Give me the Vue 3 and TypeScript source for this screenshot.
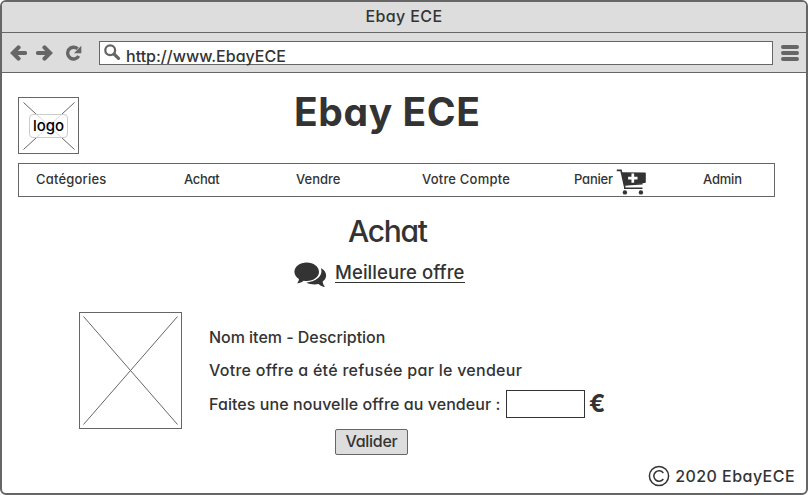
<script setup lang="ts">
import { ref } from 'vue'

interface NavItem {
  label: string
  cls: string
  cart?: boolean
}

const url = 'http://www.EbayECE'
const offer = ref('')
const navItems: NavItem[] = [
  { label: 'Catégories', cls: 'categories' },
  { label: 'Achat', cls: 'achat' },
  { label: 'Vendre', cls: 'vendre' },
  { label: 'Votre Compte', cls: 'compte' },
  { label: 'Panier', cls: 'panier', cart: true },
  { label: 'Admin', cls: 'admin' },
]
</script>

<template>
  <div class="window">
    <div class="titlebar"><span>Ebay ECE</span></div>
    <div class="toolbar">
      <svg class="nav-arrow" width="17" height="16" viewBox="0 0 17 16">
        <path d="M8.500 2.400 3 8l5.500 5.600M4 8h11" />
      </svg>
      <svg class="nav-arrow forward" width="17" height="16" viewBox="0 0 17 16">
        <path d="M8.500 2.400 14 8l-5.500 5.600M13 8H2" />
      </svg>
      <svg class="reload" width="17" height="16" viewBox="0 0 17 16">
        <path class="arc" d="M12.600 3.800A5.900 5.900 0 1 0 13.700 11" />
        <path class="head" d="M16.300 .8v7.400H9z" />
      </svg>
      <div class="address">
        <svg class="search" width="18" height="18" viewBox="0 0 18 18">
          <circle cx="6.200" cy="6.300" r="4.900" />
          <path d="m10 10 4.500 4.300" />
        </svg>
        <span>{{ url }}</span>
      </div>
      <div class="menu"><i></i><i></i><i></i></div>
    </div>

    <main>
      <header>
        <div class="logo">
          <svg width="59" height="55" viewBox="0 0 59 55"><path d="m4.500 4.500 51 47M55.500 4.500l-51 47" /></svg>
          <span>logo</span>
        </div>
        <h1>Ebay ECE</h1>
      </header>

      <nav>
        <a v-for="item in navItems" :key="item.label" :class="item.cls">
          <span>{{ item.label }}</span>
          <svg v-if="item.cart" width="30" height="26" viewBox="0 0 30 26">
            <path class="frame" d="M.8 1.400H5L9 19.300M7.500 16l19-1.200M8 19.200h18.500" />
            <path class="basket" d="M5.800 3.200 29 3.500q.8 0 .8.800v8.700q0 1-1 1.100L8.200 16.600z" />
            <circle cx="8.900" cy="23.400" r="2.200" />
            <circle cx="24.900" cy="23.400" r="2.200" />
            <path class="plus" d="M16.800 4.400v9.400M12.100 9.100h9.400" />
          </svg>
        </a>
      </nav>

      <h2>Achat</h2>
      <div class="best-offer">
        <svg width="33" height="26" viewBox="0 0 33 26">
          <path d="M26.900 6.300c3.300 1.500 5.200 4.200 5.200 7.300 0 2.500-1.300 4.500-3.400 6 .1 2.200.7 3.700 2.300 5.200-2.600 0-4.600-.9-6.400-2.800-4.200.8-8.700.4-12.200-1.600C20.700 20 29.800 14.500 26.900 6.300z" />
          <path d="M12.700.5C19.500.5 25 4.600 25 9.800s-5.500 9.300-12.300 9.300c-1 0-2-.1-3-.3C7.900 20.500 5.400 21.300 2.900 21.200c1.300-1.100 2-2.600 2-4.300C2.100 15.200.400 12.700.400 9.800.400 4.600 5.900.5 12.700.5z" />
        </svg>
        <a>Meilleure offre</a>
      </div>

      <section class="item">
        <svg class="photo" width="103" height="117" viewBox="0 0 103 117">
          <rect x=".5" y=".5" width="102" height="116" />
          <path d="M4.500 4.500 98.500 112.500M98.500 4.500 4.500 112.500" />
        </svg>
        <form @submit.prevent>
          <p class="name">Nom item - Description</p>
          <p class="status">Votre offre a été refusée par le vendeur</p>
          <label>
            <span>Faites une nouvelle offre au vendeur :</span>
            <input v-model="offer" type="text" />
            <b>€</b>
          </label>
          <button type="submit"><span>Valider</span></button>
        </form>
      </section>

      <footer>
        <svg width="22" height="22" viewBox="0 0 22 22">
          <circle cx="11" cy="11" r="9.600" />
          <path d="M15.300 8A5.200 5.200 0 1 0 15.300 14" />
        </svg>
        <span>2020 EbayECE</span>
      </footer>
    </main>
  </div>
</template>

<style>
body {
  background: #fff;
}
</style>

<style scoped>
* {
  box-sizing: border-box;
}
.window {
  width: 808px;
  height: 495px;
  display: flex;
  flex-direction: column;
  border: 2px solid #666;
  border-radius: 6px;
  overflow: hidden;
  background: #fff;
  color: #333;
  font-family: Inter, "Liberation Sans", sans-serif;
  font-feature-settings: "cv11";
  font-size: 16px;
  font-weight: 500;
  white-space: nowrap;
}
.titlebar {
  height: 31px;
  flex: none;
  border-bottom: 1px solid #666;
  background: #ddd;
  text-align: center;
  line-height: 29px;
  letter-spacing: 0.4px;
}
.toolbar {
  height: 40px;
  flex: none;
  display: flex;
  align-items: center;
  padding: 0 6px 0 8px;
  background: #ddd;
  border-bottom: 1px solid #666;
}
.nav-arrow {
  fill: none;
  stroke: #666;
  stroke-width: 4.200;
  stroke-linecap: round;
}
.forward {
  margin-left: 9px;
}
.reload {
  margin-left: 12px;
}
.arc {
  fill: none;
  stroke: #666;
  stroke-width: 3.400;
}
.head {
  fill: #666;
}
.address {
  display: flex;
  width: 674px;
  height: 24px;
  margin-left: 17px;
  padding-left: 4px;
  border: 1px solid #666;
  background: #fff;
}
.address span {
  padding: 4px 0 0 4px;
  line-height: 20px;
}
.search {
  margin-top: 2px;
  fill: none;
  stroke: #666;
  stroke-width: 2.300;
}
.search path {
  stroke-width: 3.200;
  stroke-linecap: round;
}
.menu {
  display: grid;
  gap: 2px;
  margin-left: 8px;
}
.menu i {
  width: 18px;
  height: 4px;
  border-radius: 2px;
  background: #666;
}
main {
  flex: 1;
  display: flex;
  flex-direction: column;
  padding: 24px 11px 0 16px;
}
header {
  display: flex;
  height: 57px;
}
.logo {
  width: 61px;
  height: 57px;
  display: grid;
  place-items: center;
  border: 1px solid #666;
}
.logo > * {
  grid-area: 1 / 1;
}
.logo svg {
  stroke: #666;
}
.logo span {
  width: 39px;
  height: 24px;
  border: 1px solid #ccc;
  border-radius: 4px;
  background: rgba(255, 255, 255, 0.75);
  color: #000;
  text-align: center;
  line-height: 22px;
  font-size: 15px;
}
h1 {
  margin: 0 0 0 215px;
  font-size: 39px;
  font-weight: 700;
  line-height: 30px;
  letter-spacing: 0.6px;
}
nav {
  display: grid;
  grid-template-columns: 148px 112px 126px 152px 129px 1fr;
  width: 757px;
  height: 34px;
  margin-top: 9px;
  padding-left: 17px;
  border: 1px solid #666;
  font-size: 13px;
  line-height: 31px;
}
nav a {
  display: flex;
}
.categories {
  letter-spacing: 0.2px;
}
.achat {
  letter-spacing: -0.3px;
}
.panier,
.admin {
  letter-spacing: -0.2px;
}
.compte {
  letter-spacing: 0.2px;
}
.panier span {
  width: 40px;
}
nav svg {
  margin: 5px 0 0 2px;
  fill: #333;
}
.frame {
  fill: none;
  stroke: #333;
  stroke-width: 1.600;
}
.plus {
  fill: none;
  stroke: #fff;
  stroke-width: 2.700;
}
h2 {
  width: 757px;
  margin: 14px 0 0 -9px;
  padding-left: 339px;
  font-size: 30px;
  font-weight: 500;
  line-height: 40px;
  letter-spacing: -1.300px;
}
.best-offer {
  display: flex;
  height: 26px;
  margin: 10px 0 0 276px;
}
.best-offer svg {
  margin-top: 1px;
  fill: #333;
}
.best-offer a {
  height: 22px;
  margin-left: 8px;
  border-bottom: 1px solid #333;
  line-height: 22px;
  font-size: 18.500px;
  letter-spacing: 0.070px;
}
.item {
  display: flex;
  gap: 27px;
  margin: 25px 0 0 61px;
}
.photo {
  fill: none;
  stroke: #666;
}
form {
  display: flex;
  flex-direction: column;
  padding-top: 9px;
}
p {
  margin: 0;
  height: 33px;
  line-height: 33px;
}
.name {
  letter-spacing: -0.030px;
}
.status {
  letter-spacing: 0.280px;
}
label {
  display: flex;
  align-items: center;
  height: 34px;
}
label span {
  width: 297px;
  letter-spacing: 0.070px;
}
input {
  width: 79px;
  height: 28px;
  border: 1px solid #333;
  background: #fff;
}
label b {
  margin-left: 4px;
  font-size: 24px;
  line-height: 28px;
}
button {
  width: 73px;
  height: 26px;
  margin: 8px 0 0 126px;
  padding: 0 0 2px;
  border: 1px solid #666;
  border-radius: 2px;
  background: #ddd;
  color: #333;
  font: inherit;
  font-feature-settings: inherit;
  line-height: 22px;
  letter-spacing: -0.300px;
}
footer {
  display: flex;
  align-items: center;
  justify-content: flex-end;
  gap: 5px;
  height: 22px;
  margin-top: 10px;
  letter-spacing: 0.450px;
}
footer svg {
  fill: none;
  stroke: #333;
  stroke-width: 1.500;
}
</style>
